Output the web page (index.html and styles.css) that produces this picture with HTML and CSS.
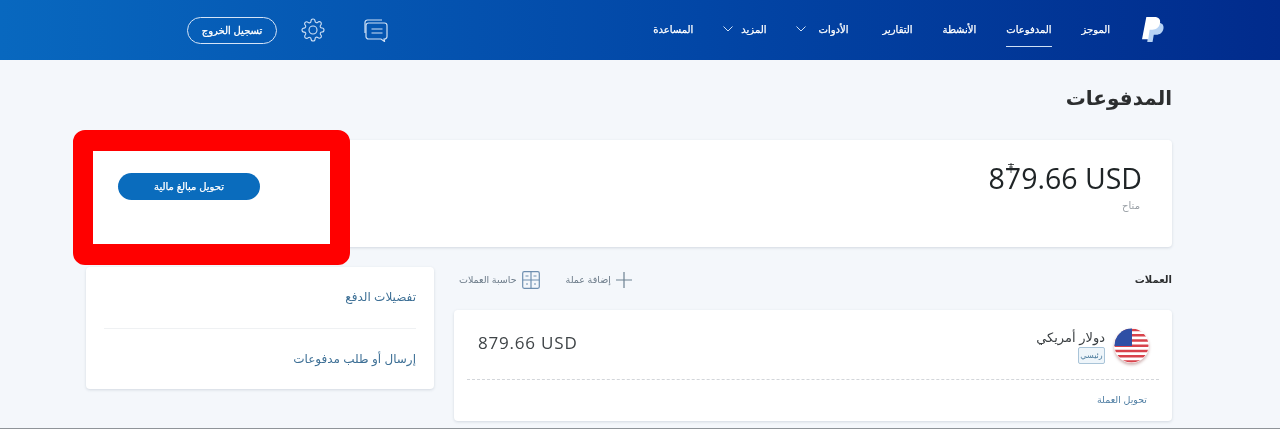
FILE: index.html
```html
<!DOCTYPE html>
<html lang="ar" dir="rtl">
<head>
<meta charset="utf-8">
<title>المدفوعات</title>
<link rel="stylesheet" href="styles.css">
</head>
<body>
<header class="topbar">
  <svg class="logo" viewBox="0 0 24 28" aria-hidden="true">
    <path class="logo-back" d="M8 6h9c4 0 6 2.500 5.400 6-.7 4.500-3.800 6.500-7.700 6.500h-2.400L11 26H5.500z"/>
    <path class="logo-front" d="M4.500 0H13c4.500 0 6.500 2.500 5.800 6.300-.8 4.700-4 6.900-8.100 6.900H8L6.500 23H0z"/>
  </svg>
  <nav class="nav">
    <a class="nav-item">الموجز</a>
    <a class="nav-item active">المدفوعات</a>
    <a class="nav-item">الأنشطة</a>
    <a class="nav-item">التقارير</a>
    <a class="nav-item nav-wide">الأدوات<svg class="chev" viewBox="0 0 10 6"><path d="M.5.5 5 5 9.500.5"/></svg></a>
    <a class="nav-item">المزيد<svg class="chev" viewBox="0 0 10 6"><path d="M.5.500 5 5 9.500.5"/></svg></a>
    <a class="nav-item">المساعدة</a>
  </nav>
  <div class="tools">
    <svg class="chat" viewBox="0 0 26 24" aria-hidden="true">
      <path d="M3 15V4.500A2.500 2.500 0 0 1 5.500 2H20"/>
      <path d="M6.500 5h16A2.500 2.500 0 0 1 25 7.500v11a2.500 2.500 0 0 1-2.500 2.500H22l.5 2.500-3.500-2.500H6.500A2.500 2.500 0 0 1 4 18.500v-11A2.500 2.500 0 0 1 6.500 5z"/>
      <path d="M9.500 11h11M9.500 15h11"/>
    </svg>
    <svg class="gear" viewBox="0 0 24 24" aria-hidden="true">
      <circle cx="12" cy="12" r="4"/>
      <path d="M19.400 15a1.650 1.650 0 0 0 .33 1.820l.06.06a2 2 0 0 1 0 2.830 2 2 0 0 1-2.830 0l-.06-.06a1.650 1.650 0 0 0-1.820-.33 1.650 1.650 0 0 0-1 1.510V21a2 2 0 0 1-2 2 2 2 0 0 1-2-2v-.09A1.650 1.650 0 0 0 9 19.400a1.650 1.650 0 0 0-1.820.33l-.06.06a2 2 0 0 1-2.830 0 2 2 0 0 1 0-2.830l.06-.06a1.650 1.650 0 0 0 .33-1.820 1.650 1.650 0 0 0-1.510-1H3a2 2 0 0 1-2-2 2 2 0 0 1 2-2h.09A1.650 1.650 0 0 0 4.600 9a1.650 1.650 0 0 0-.33-1.820l-.06-.06a2 2 0 0 1 0-2.830 2 2 0 0 1 2.830 0l.06.06a1.650 1.650 0 0 0 1.820.33H9a1.650 1.650 0 0 0 1-1.510V3a2 2 0 0 1 2-2 2 2 0 0 1 2 2v.09a1.650 1.650 0 0 0 1 1.510 1.650 1.650 0 0 0 1.820-.33l.06-.06a2 2 0 0 1 2.830 0 2 2 0 0 1 0 2.830l-.06.06a1.650 1.650 0 0 0-.33 1.820V9a1.650 1.650 0 0 0 1.510 1H21a2 2 0 0 1 2 2 2 2 0 0 1-2 2h-.09a1.650 1.650 0 0 0-1.510 1z"/>
    </svg>
    <a class="logout">تسجيل الخروج</a>
  </div>
</header>

<main class="page">
  <h1 class="title">المدفوعات</h1>
  <section class="card balance">
    <div class="balance-info">
      <div class="amount" dir="ltr">879.66 USD<svg class="tick" viewBox="0 0 8 10"><path d="M1 1.500h6M4 0v10M2 4h4"/></svg></div>
      <div class="available">متاح</div>
    </div>
    <a class="primary">تحويل مبالغ مالية</a>
  </section>

  <div class="columns">
    <section>
      <div class="cur-head">
        <h2 class="cur-title">العملات</h2>
        <div class="cur-actions">
          <a class="action"><svg class="plus" viewBox="0 0 16 16"><path d="M8 0v16M0 8h16"/></svg>إضافة عملة</a>
          <a class="action"><svg class="calc" viewBox="0 0 18 18"><rect x=".7" y=".7" width="16.600" height="16.600" rx="1.500"/><path d="M9 .7v16.600M.7 9h16.600M3.500 5h3M11.500 5h3M4 13h2M12 13h2"/></svg>حاسبة العملات</a>
        </div>
      </div>
      <div class="card currency">
        <div class="cur-row">
          <svg class="flag" viewBox="0 0 36 36" aria-hidden="true">
            <defs><clipPath id="round"><circle cx="18" cy="18" r="17.500"/></clipPath></defs>
            <g clip-path="url(#round)">
              <rect width="36" height="36" fill="#fff"/>
              <path class="stripes" d="M0 2h36M0 7.400h36M0 12.800h36M0 18.200h36M0 23.600h36M0 29h36M0 34.400h36"/>
              <rect width="18.500" height="18.500" fill="#2f4fa5"/>
            </g>
          </svg>
          <div class="cur-name">
            <div class="cur-label">دولار أمريكي</div>
            <span class="badge">رئيسي</span>
          </div>
          <div class="cur-amount" dir="ltr">879.66 USD</div>
        </div>
        <a class="convert">تحويل العملة</a>
      </div>
    </section>
    <aside class="card side">
      <a class="side-link">تفضيلات الدفع</a>
      <a class="side-link">إرسال أو طلب مدفوعات</a>
    </aside>
  </div>
</main>
<div class="highlight"></div>
</body>
</html>
```
FILE: styles.css
```css
* { box-sizing: border-box; }
html, body { margin: 0; height: 429px; overflow: hidden; }
body {
  position: relative;
  display: flex;
  flex-direction: column;
  background: #f4f7fb;
  border-bottom: 1px solid #8f9499;
  font-family: "Liberation Sans", "DejaVu Sans", sans-serif;
  color: #2c2e2f;
  filter: blur(.35px);
}
.topbar {
  flex: none;
  height: 60px;
  display: flex;
  align-items: center;
  padding: 0 115px 0 187px;
  background: linear-gradient(to left, #012b8c 0%, #0246a6 45%, #0868bf 100%);
  color: #fff;
}
.logo { width: 23px; height: 27px; margin-left: 32px; }
.logo-back { fill: #b7d3f5; }
.logo-front { fill: #fff; }
.nav { display: flex; align-items: center; height: 60px; gap: 30px; }
.nav-item {
  position: relative;
  display: flex;
  align-items: center;
  gap: 8px;
  font-size: 10px;
  -webkit-text-stroke: .25px #fff;
  height: 60px;
  padding-bottom: 2px;
}
.nav-wide { margin-right: 4px; gap: 12px; }
.nav-item.active::after {
  content: "";
  position: absolute;
  left: 0;
  right: 0;
  bottom: 13px;
  height: 1px;
  background: #cfe0f5;
}
.chev { width: 10px; height: 6px; fill: none; stroke: #cfe0f5; stroke-width: 1; }
.tools { margin-right: auto; display: flex; align-items: center; }
.chat { width: 26px; height: 24px; margin-left: 37px; fill: none; stroke: #cfe0f5; stroke-width: 1.200; }
.gear { width: 24px; height: 24px; margin-left: 24px; fill: none; stroke: #cfe0f5; stroke-width: 1.100; }
.logout {
  width: 90px;
  height: 27px;
  display: flex;
  align-items: center;
  justify-content: center;
  border: 1px solid #d5e4f7;
  border-radius: 14px;
  font-size: 10px;
  -webkit-text-stroke: .3px #fff;
}
.page { flex: 1; padding: 0 108px 0 86px; }
.title { margin: 23px 0 26px; height: 31px; line-height: 31px; font-size: 20px; font-weight: 700; color: #2c2e2f; }
.card {
  background: #fff;
  border-radius: 4px;
  box-shadow: 0 1px 3px rgba(40, 60, 90, .16);
}
.balance {
  height: 107px;
  display: flex;
  justify-content: space-between;
  align-items: flex-start;
  padding: 23px 30px 0 32px;
}
.amount {
  position: relative;
  font-family: "Open Sans", sans-serif;
  font-size: 28.500px;
  line-height: 30px;
  color: #1f2426;
}
.tick {
  position: absolute;
  left: 18px;
  top: 0;
  width: 8px;
  height: 10px;
  fill: none;
  stroke: #1f2426;
  stroke-width: .8;
}
.available { margin: 7px 2px 0 0; font-size: 10px; color: #9aa0a6; }
.primary {
  width: 142px;
  height: 27px;
  margin-top: 10px;
  display: flex;
  align-items: center;
  justify-content: center;
  border-radius: 14px;
  background: #0a6cbd;
  color: #fff;
  font-size: 10px;
  -webkit-text-stroke: .25px #fff;
}
.columns {
  display: grid;
  grid-template-columns: 718px 348px;
  gap: 20px;
  margin-top: 20px;
  align-items: start;
}
.cur-head { display: flex; align-items: center; justify-content: space-between; height: 25px; margin-bottom: 18px; padding-left: 5px; }
.cur-title { margin: 0; font-size: 10px; font-weight: 700; color: #2c2e2f; }
.cur-actions { display: flex; gap: 26px; }
.action { display: flex; align-items: center; gap: 5px; font-size: 9.500px; color: #6b7a88; }
.plus { width: 16px; height: 16px; fill: none; stroke: #6d8192; stroke-width: 1.200; }
.calc { width: 18px; height: 18px; fill: none; stroke: #6f8fb0; stroke-width: 1.200; }
.currency { height: 111px; padding: 18px 13px 0 13px; }
.cur-row {
  display: flex;
  align-items: flex-start;
  height: 52px;
  padding: 0 10px 0 11px;
  border-bottom: 1px dashed #d3d6da;
}
.flag { width: 35px; height: 35px; border-radius: 50%; box-shadow: 0 2px 3px rgba(120, 40, 40, .35); }
.stripes { stroke: #d8434c; stroke-width: 2.700; }
.cur-name { margin-right: 9px; }
.cur-label { font-size: 13px; line-height: 20px; color: #3a3f42; }
.badge {
  display: block;
  margin-top: -1px;
  height: 17px;
  width: 27px;
  border: 1px solid #a9c4d8;
  border-radius: 2px;
  background: #eef5fa;
  font-size: 8px;
  line-height: 15px;
  text-align: center;
  color: #4a7a9c;
}
.cur-amount {
  margin-right: auto;
  margin-top: 5px;
  font-family: "Open Sans", sans-serif;
  font-size: 17px;
  letter-spacing: .8px;
  line-height: 20px;
  color: #3f4447;
}
.convert { display: block; margin: 14px 12px 0 0; font-size: 9.500px; color: #4f7ea3; }
.side {
  height: 122px;
  padding: 0 18px;
  display: flex;
  flex-direction: column;
}
.side-link {
  flex: 1;
  display: flex;
  align-items: center;
  font-size: 12px;
  color: #3e7096;
}
.side-link:first-child { border-bottom: 1px solid #eff1f3; }
.highlight {
  position: absolute;
  left: 73px;
  top: 130px;
  width: 277px;
  height: 135px;
  border: solid #ff0000;
  border-width: 21px 20px;
  border-radius: 12px;
}
```
